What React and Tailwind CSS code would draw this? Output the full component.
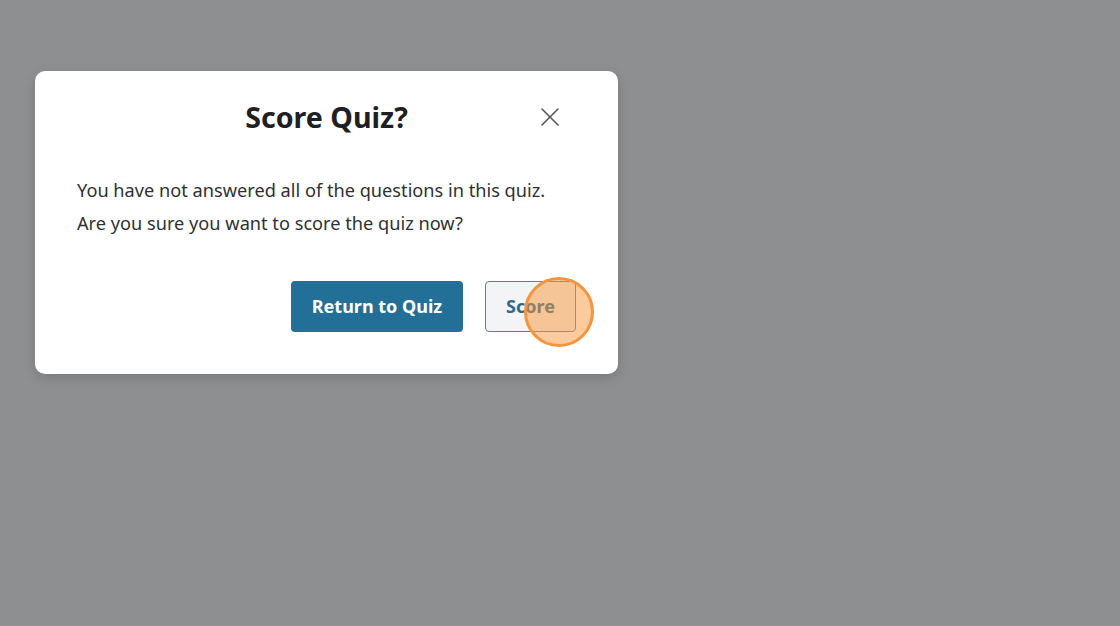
export default function App() {
  return (
    <div className="w-[1120px] h-[626px] bg-[#8e8f91] relative overflow-hidden" style={{ fontFamily: '"Noto Sans", "Open Sans", sans-serif' }}>
      <div className="absolute left-[35px] top-[71px] w-[583px] h-[303px] bg-white rounded-[10px] shadow-[0_4px_12px_rgba(0,0,0,0.15)] px-[42px] pt-[26px] flex flex-col">
        <div className="relative flex items-center justify-center h-[40px]">
          <h1 className="text-[28.6px] leading-[40px] font-bold text-[#1e2124]">Score Quiz?</h1>
          <button className="absolute right-[16px] top-[10px] w-[20px] h-[20px] flex items-center justify-center">
            <svg width="20" height="20" viewBox="0 0 20 20" fill="none" stroke="#555" strokeWidth="1.6" strokeLinecap="round">
              <path d="M2 2L18 18M18 2L2 18" />
            </svg>
          </button>
        </div>
        <div className="mt-[37px] text-[18.2px] leading-[33px] text-[#2e3133]">
          <p>You have not answered all of the questions in this quiz.</p>
          <p>Are you sure you want to score the quiz now?</p>
        </div>
        <div className="mt-[41px] flex justify-end gap-[22px]">
          <button className="w-[172px] h-[51px] rounded-[4px] bg-[#226f98] text-white text-[18px] font-bold">Return to Quiz</button>
          <button className="w-[91px] h-[51px] rounded-[4px] bg-[#f3f4f5] border border-[#5f7f95] text-[#2a6a8d] text-[18px] font-bold">Score</button>
        </div>
      </div>
      <div className="absolute left-[524px] top-[277px] w-[70px] h-[70px] rounded-full border-[3px] border-[#f7943a] bg-[#f7953c]/50"></div>
    </div>
  );
}
